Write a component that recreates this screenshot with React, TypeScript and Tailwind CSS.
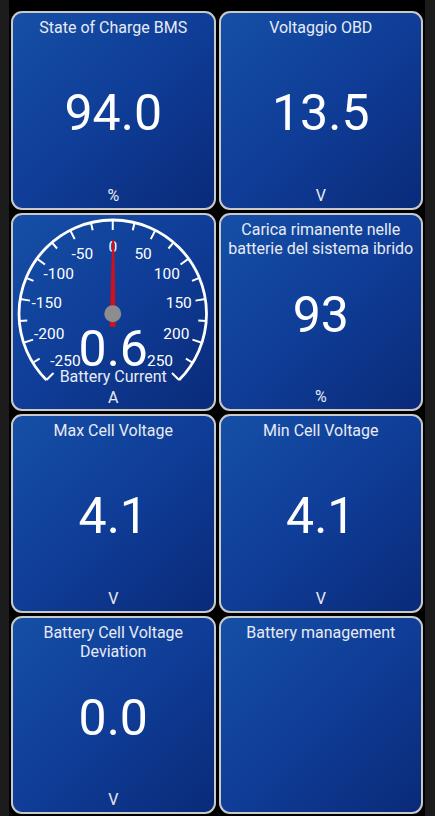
import React from "react";

type TileData = { title: string; value?: string; unit?: string };

const card =
  "rounded-[11px] border-2 border-[#c9c9c9] bg-gradient-to-br from-[#164fa6] via-[#0f3d97] to-[#0a2a79] text-center";

function Tile({ title, value, unit }: TileData) {
  return (
    <div className={`${card} grid grid-rows-[1fr_auto_1fr] px-[3px] pt-[5px] pb-[3px]`}>
      <div className="self-start whitespace-pre-line text-[16px] leading-[19px] text-[#e8ebf4]">{title}</div>
      <div className="mt-[4px] text-[50px] leading-none text-white">{value ?? ""}</div>
      <div className="self-end text-[16px] leading-[19px] text-[#e8ebf4]">{unit ?? ""}</div>
    </div>
  );
}

// gauge geometry, inside the card's padding box (201 x 195)
const CX = 100;
const CY = 99;
const R = 94;
const LABEL_R = 67;
const DEG_PER_UNIT = 27 / 50;

function pt(angle: number, r: number) {
  const a = (angle * Math.PI) / 180;
  return { x: CX + r * Math.sin(a), y: CY - r * Math.cos(a) };
}

function Gauge() {
  const start = pt(-135, R);
  const end = pt(135, R);
  const ticks: number[] = [];
  for (let v = -250; v <= 250; v += 25) ticks.push(v);
  const labels = [-250, -200, -150, -100, -50, 0, 50, 100, 150, 200, 250];

  // needle pointing at 0.6 A
  const na = 0.6 * DEG_PER_UNIT;
  const tip = pt(na, 74);
  const tail = pt(na + 180, 13);

  return (
    <svg viewBox="0 0 201 195" className="absolute inset-0 h-full w-full">
      <path
        d={`M ${start.x} ${start.y} A ${R} ${R} 0 1 1 ${end.x} ${end.y}`}
        fill="none"
        stroke="#ffffff"
        strokeWidth={2.8}
      />
      {ticks.map((v) => {
        const a = v * DEG_PER_UNIT;
        const o = pt(a, R);
        const i = pt(a, v % 50 === 0 ? 84 : 86);
        return <line key={v} x1={o.x} y1={o.y} x2={i.x} y2={i.y} stroke="#ffffff" strokeWidth={2} />;
      })}
      {labels.map((v) => {
        const p = pt(v * DEG_PER_UNIT, LABEL_R);
        return (
          <text
            key={v}
            x={p.x}
            y={p.y}
            textAnchor="middle"
            dominantBaseline="central"
            fontSize={15.5}
            fill="#ffffff"
            fontFamily="Roboto, sans-serif"
          >
            {v}
          </text>
        );
      })}
      <polygon
        points={`${tip.x - 1},${tip.y} ${tip.x + 1},${tip.y} ${tail.x + 3},${tail.y} ${tail.x - 3},${tail.y}`}
        fill="#d0101c"
      />
      <circle cx={CX} cy={CY} r={8.5} fill="#8d8d8d" />
    </svg>
  );
}

function GaugeTile() {
  return (
    <div className={`${card} relative flex flex-col justify-end px-[3px] pb-[2px]`}>
      <Gauge />
      <div className="relative text-[50px] leading-[38px] text-white">0.6</div>
      <div className="relative text-[16px] leading-[18px] text-[#e8ebf4]">Battery Current</div>
      <div className="relative mt-[3px] text-[16px] leading-[18px] text-[#e8ebf4]">A</div>
    </div>
  );
}

export default function App() {
  return (
    <div className="flex h-[816px] w-[435px] bg-black font-['Roboto',sans-serif]">
      <div className="w-[9px] bg-[#1c1c1c]" />
      <div className="flex-1 px-[2px] pt-[11px] pb-[2px]">
        <div className="grid h-full grid-cols-2 grid-rows-4 gap-[3px]">
          <Tile title="State of Charge BMS" value="94.0" unit="%" />
          <Tile title="Voltaggio OBD" value="13.5" unit="V" />
          <GaugeTile />
          <Tile title={"Carica rimanente nelle\nbatterie del sistema ibrido"} value="93" unit="%" />
          <Tile title="Max Cell Voltage" value="4.1" unit="V" />
          <Tile title="Min Cell Voltage" value="4.1" unit="V" />
          <Tile title={"Battery Cell Voltage\nDeviation"} value="0.0" unit="V" />
          <Tile title="Battery management" />
        </div>
      </div>
      <div className="w-[10px] bg-[#1c1c1c]" />
    </div>
  );
}
